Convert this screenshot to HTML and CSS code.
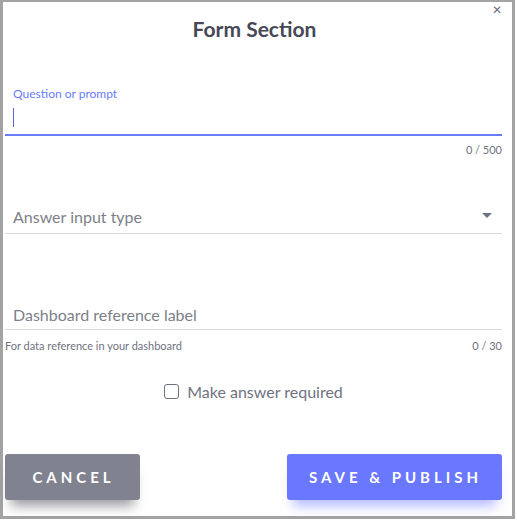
FILE: index.html
```html
<!DOCTYPE html>
<html>
<head>
<meta charset="utf-8">
<link rel="stylesheet" href="styles.css">
</head>
<body>
<div class="dialog">
  <button class="close" aria-label="close">&#x2715;</button>
  <h1 class="title">Form Section</h1>

  <div class="field focused">
    <label class="float-label">Question or prompt</label>
    <div class="input"><span class="caret"></span></div>
  </div>
  <div class="helper"><span></span><span>0 / 500</span></div>

  <div class="field select">
    <div class="input placeholder">Answer input type
      <svg class="arrow" width="10" height="5" viewBox="0 0 10 5"><path d="M0 0h10L5 5z" fill="#6f7280"/></svg>
    </div>
  </div>

  <div class="field dash">
    <div class="input placeholder">Dashboard reference label</div>
  </div>
  <div class="helper small"><span>For data reference in your dashboard</span><span>0 / 30</span></div>

  <div class="check-row">
    <span class="box"></span>
    <span class="check-label">Make answer required</span>
  </div>

  <div class="actions">
    <button class="btn cancel">CANCEL</button>
    <button class="btn save">SAVE &amp; PUBLISH</button>
  </div>
</div>
</body>
</html>
```

FILE: styles.css
```css
html, body {
  margin: 0;
  padding: 0;
  background: #ffffff;
}
body {
  font-family: Lato, "Noto Sans", sans-serif;
}
.dialog {
  position: relative;
  box-sizing: border-box;
  width: 515px;
  height: 519px;
  border-style: solid;
  border-color: #a3a3a3;
  border-width: 2px 3px 3px 3px;
  padding: 0 10px 0 2px;
  background: #fff;
}
.close {
  position: absolute;
  top: 1px;
  right: 10px;
  border: none;
  background: none;
  padding: 0;
  font-size: 12px;
  font-weight: 700;
  color: #6f7280;
  font-family: "DejaVu Sans", sans-serif;
  cursor: pointer;
}
.title {
  margin: 0;
  padding-top: 14px;
  padding-left: 2px;
  text-align: center;
  font-size: 21px;
  font-weight: 700;
  color: #464955;
  line-height: 26px;
}
.field {
  position: relative;
  border-bottom: 1px solid #d9d9df;
}
.field.focused {
  margin-top: 45px;
  border-bottom: 2px solid #6a7bff;
}
.float-label {
  display: block;
  padding-left: 8px;
  font-size: 12px;
  color: #6a7bff;
  line-height: 14px;
}
.input {
  height: 26px;
  padding-left: 8px;
  display: flex;
  align-items: center;
  font-size: 16px;
  color: #7c7f8a;
}
.focused .input {
  height: 33px;
}
.caret {
  display: block;
  width: 1px;
  height: 19px;
  background: #5a66d6;
}
.helper {
  display: flex;
  justify-content: space-between;
  font-size: 11px;
  color: #6f7280;
  line-height: 14px;
  padding-top: 7px;
}
.helper.small {
  padding-top: 9px;
}
.select {
  margin-top: 46px;
}
.select .input {
  justify-content: space-between;
  padding-right: 10px;
  padding-bottom: 4px;
}
.arrow {
  display: block;
  margin-top: -2px;
}
.dash {
  margin-top: 67px;
}
.dash .input {
  padding-bottom: 2px;
}
.check-row {
  display: flex;
  align-items: center;
  justify-content: center;
  gap: 8px;
  margin-top: 29px;
  line-height: 19px;
}
.box {
  display: block;
  width: 13px;
  height: 13px;
  border: 1.5px solid #6f7280;
  border-radius: 3px;
}
.check-label {
  font-size: 16px;
  color: #6f7280;
}
.actions {
  display: flex;
  justify-content: space-between;
  margin-top: 53px;
}
.btn {
  height: 46px;
  border: none;
  border-radius: 3px;
  color: #fff;
  font-family: Lato, "Noto Sans", sans-serif;
  font-weight: 700;
  font-size: 15px;
  letter-spacing: 4px;
  cursor: pointer;
}
.cancel {
  width: 135px;
  background: #80838f;
  box-shadow: 0 12px 12px -6px rgba(60, 62, 72, 0.5);
  padding-left: 8px;
}
.save {
  width: 215px;
  background: #6a78ff;
  box-shadow: 0 12px 12px -6px rgba(106, 120, 255, 0.5);
  padding-left: 8px;
}
```
